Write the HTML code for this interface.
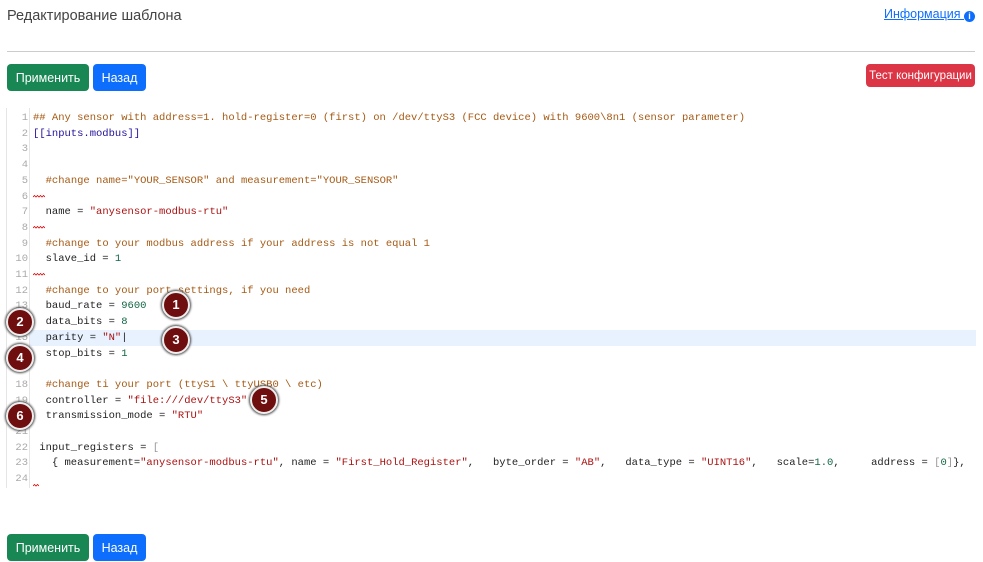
<!DOCTYPE html>
<html><head><meta charset="utf-8"><style>
body{margin:0;background:#fff;font-family:"Liberation Sans",sans-serif;width:983px;height:562px;overflow:hidden;position:relative}
.t{position:absolute;left:7px;top:8px;font-size:14.5px;color:#444}
.info{position:absolute;right:8px;top:7px;font-size:12.5px;color:#0d6efd;text-decoration:underline}
.info i{display:inline-block;width:11px;height:11px;border-radius:50%;background:#0d6efd;color:#fff;font-size:9px;text-align:center;line-height:11px;font-style:normal;font-weight:bold;vertical-align:-1px;text-decoration:none}
.hr{position:absolute;left:7px;right:8px;top:51px;border-top:1px solid #ccc}
.b{position:absolute;height:27px;display:flex;align-items:center;justify-content:center;color:#fff;font-size:12.5px;border-radius:4px}
.g{background:#198754;width:82px;left:7px}.bl{background:#0d6efd;width:53px;left:93px}
.r{background:#dc3545;left:866px;width:109px;top:64px;height:23px;font-size:11.5px}
.ed{position:absolute;left:6px;top:108px;width:969px;height:380px;border-left:1px solid #e5e5e5}
.gut{position:absolute;left:0;top:0;width:22px;height:380px;background:#fff;border-right:1px solid #e5e5e5}
.ln{position:absolute;left:0;width:21px;text-align:right;color:#aaa;font:10.5px "Liberation Mono",monospace}
.cd{position:absolute;left:26px;white-space:pre;font:10.5px/15.7px "Liberation Mono",monospace;color:#222}
.c{color:#a55a14}.s{color:#a11}.n{color:#164}.h{color:#219}.k{color:#999}
.hl{position:absolute;left:23px;right:0;top:222px;height:15.7px;background:#e8f2ff}
.sq{position:absolute;left:26px;width:12px;height:3px}
.bd{position:absolute;width:24px;height:24px;border-radius:50%;background:#6e0e0e;border:2px solid #eee;box-shadow:0 0 2px 1px #444;color:#fff;font-weight:bold;font-size:13px;text-align:center;line-height:24px}
</style></head><body>
<div class="t">Редактирование шаблона</div>
<div class="info">Информация <i>i</i></div>
<div class="hr"></div>
<div class="b g" style="top:64px">Применить</div><div class="b bl" style="top:64px">Назад</div>
<div class="b r">Тест конфигурации</div>
<div class="ed">
<div class="gut"></div>
<div class="hl"></div>
<div class="ln" style="top:3px;line-height:15.7px">1<br>2<br>3<br>4<br>5<br>6<br>7<br>8<br>9<br>10<br>11<br>12<br>13<br>14<br>15<br>16<br>17<br>18<br>19<br>20<br>21<br>22<br>23<br>24</div>
<div class="cd" style="top:3px"><span class="c">## Any sensor with address=1. hold-register=0 (first) on /dev/ttyS3 (FCC device) with 9600\8n1 (sensor parameter)</span>
<span class="h">[[inputs.modbus]]</span>


  <span class="c">#change name="YOUR_SENSOR" and measurement="YOUR_SENSOR"</span>

  name = <span class="s">"anysensor-modbus-rtu"</span>

  <span class="c">#change to your modbus address if your address is not equal 1</span>
  slave_id = <span class="n">1</span>

  <span class="c">#change to your port settings, if you need</span>
  baud_rate = <span class="n">9600</span>
  data_bits = <span class="n">8</span>
  parity = <span class="s">"N"</span>|
  stop_bits = <span class="n">1</span>

  <span class="c">#change ti your port (ttyS1 \ ttyUSB0 \ etc)</span>
  controller = <span class="s">"file:///dev/ttyS3"</span>
  transmission_mode = <span class="s">"RTU"</span>

 input_registers = <span class="k">[</span>
   { measurement=<span class="s">"anysensor-modbus-rtu"</span>, name = <span class="s">"First_Hold_Register"</span>,   byte_order = <span class="s">"AB"</span>,   data_type = <span class="s">"UINT16"</span>,   scale=<span class="n">1.0</span>,     address = <span class="k">[</span><span class="n">0</span><span class="k">]</span>},
</div>
<svg class="sq" style="top:87px" viewBox="0 0 12 3"><path d="M0 2 L1.5 0.5 L3 2 L4.5 0.5 L6 2 L7.5 0.5 L9 2 L10.5 0.5 L12 2" stroke="#d00" fill="none" stroke-width="0.8"/></svg>
<svg class="sq" style="top:118px" viewBox="0 0 12 3"><path d="M0 2 L1.5 0.5 L3 2 L4.5 0.5 L6 2 L7.5 0.5 L9 2 L10.5 0.5 L12 2" stroke="#d00" fill="none" stroke-width="0.8"/></svg>
<svg class="sq" style="top:165px" viewBox="0 0 12 3"><path d="M0 2 L1.5 0.5 L3 2 L4.5 0.5 L6 2 L7.5 0.5 L9 2 L10.5 0.5 L12 2" stroke="#d00" fill="none" stroke-width="0.8"/></svg>
<svg class="sq" style="top:376px;width:6px" viewBox="0 0 6 3"><path d="M0 2 L1.5 0.5 L3 2 L4.5 0.5 L6 2" stroke="#d00" fill="none" stroke-width="0.8"/></svg>
</div>
<div class="bd" style="left:162px;top:291px">1</div>
<div class="bd" style="left:6px;top:308px">2</div>
<div class="bd" style="left:162px;top:326px">3</div>
<div class="bd" style="left:6px;top:344px">4</div>
<div class="bd" style="left:250px;top:386px">5</div>
<div class="bd" style="left:6px;top:402px">6</div>
<div class="b g" style="top:534px">Применить</div><div class="b bl" style="top:534px">Назад</div>
</body></html>
